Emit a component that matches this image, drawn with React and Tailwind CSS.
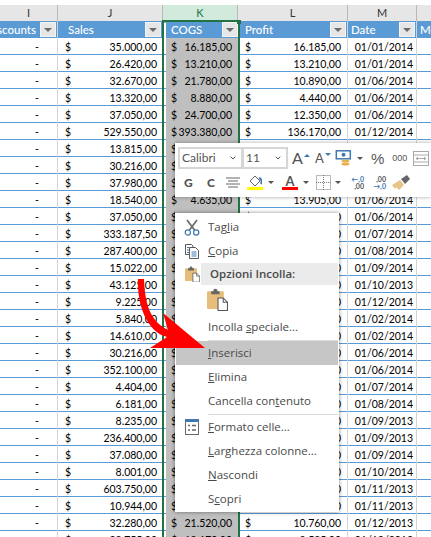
import React from 'react';
import { ChevronDown } from 'lucide-react';

const rows = [
  ['35.000,00', '16.185,00', '16.185,00', '01/01/2014'],
  ['26.420,00', '13.210,00', '13.210,00', '01/01/2014'],
  ['32.670,00', '21.780,00', '10.890,00', '01/06/2014'],
  ['13.320,00', '8.880,00', '4.440,00', '01/06/2014'],
  ['37.050,00', '24.700,00', '12.350,00', '01/06/2014'],
  ['529.550,00', '393.380,00', '136.170,00', '01/12/2014'],
  ['13.815,00', '9.210,00', '4.605,00', '01/03/2014'],
  ['30.216,00', '20.144,00', '10.072,00', '01/06/2014'],
  ['37.980,00', '25.320,00', '12.660,00', '01/06/2014'],
  ['18.540,00', '4.635,00', '13.905,00', '01/06/2014'],
  ['37.050,00', '24.700,00', '12.350,00', '01/06/2014'],
  ['333.187,50', '261.800,00', '71.387,50', '01/07/2014'],
  ['287.400,00', '239.500,00', '47.900,00', '01/08/2014'],
  ['15.022,00', '10.014,00', '5.008,00', '01/09/2014'],
  ['43.125,00', '28.750,00', '14.375,00', '01/10/2013'],
  ['9.225,00', '6.150,00', '3.075,00', '01/12/2014'],
  ['5.840,00', '1.460,00', '4.380,00', '01/02/2014'],
  ['14.610,00', '9.740,00', '4.870,00', '01/02/2014'],
  ['30.216,00', '20.144,00', '10.072,00', '01/06/2014'],
  ['352.100,00', '251.500,00', '100.600,00', '01/06/2014'],
  ['4.404,00', '3.670,00', '734,00', '01/07/2014'],
  ['6.181,00', '5.151,00', '1.030,00', '01/08/2014'],
  ['8.235,00', '5.490,00', '2.745,00', '01/09/2013'],
  ['236.400,00', '197.000,00', '39.400,00', '01/09/2013'],
  ['37.080,00', '9.270,00', '27.810,00', '01/09/2014'],
  ['8.001,00', '5.334,00', '2.667,00', '01/10/2014'],
  ['603.750,00', '575.000,00', '28.750,00', '01/11/2013'],
  ['10.944,00', '9.120,00', '1.824,00', '01/11/2013'],
  ['32.280,00', '21.520,00', '10.760,00', '01/12/2013'],
  ['28.755,00', '19.170,00', '9.585,00', '01/12/2013'],
];

const colClass = 'grid grid-cols-[58px_105px_75px_110px_69px_14px]';

const Money = ({ value, className = '' }) => (
  <div className={`flex justify-between items-center pt-[2px] border-r border-[#d4d4d4] ${className}`}>
    <span>$</span>
    <span>{value}</span>
  </div>
);

const FilterBtn = () => (
  <div className="w-[16px] h-[15px] shrink-0 bg-[#e6e6e6] border border-[#f4f4f4] flex items-center justify-center">
    <div className="w-0 h-0 border-x-[4px] border-x-transparent border-t-[4px] border-t-[#6b6b6b]" />
  </div>
);

const HeadCell = ({ label, className = '' }) => (
  <div className={`flex items-center justify-between overflow-hidden bg-[#5b9bd5] text-white text-[11.5px] font-medium ${className}`}>
    <span className="whitespace-nowrap">{label}</span>
    <FilterBtn />
  </div>
);

const ColLetter = ({ children, className = '' }) => (
  <div className={`flex items-center justify-center border-r border-[#b8b8b8] border-b border-b-[#a8a8a8] ${className}`}>
    {children}
  </div>
);

const ScissorsIcon = () => (
  <svg width="16" height="17" viewBox="0 0 16 17" fill="none">
    <path d="M3 1 L10.5 11 M13 1 L5.5 11" stroke="#707070" strokeWidth="1.8" />
    <circle cx="3.8" cy="13.5" r="2.6" stroke="#3f78b0" strokeWidth="1.2" />
    <circle cx="12.2" cy="13.5" r="2.6" stroke="#3f78b0" strokeWidth="1.2" />
  </svg>
);

const CopyIcon = () => (
  <svg width="16" height="16" viewBox="0 0 16 16" fill="none" stroke="#5a5a5a" strokeWidth="1">
    <path d="M1.5 1.5 H7.5 L9 3 V4 M1.5 1.5 V11.5 H5" />
    <path d="M5.5 4.5 H11.5 L14.5 7.5 V15.5 H5.5 Z" fill="#fff" />
    <path d="M3 4.5 H5 M3 7 H5 M3 9.500 H5 M7.500 9 H12.500 M7.500 11 H12.500 M7.500 13 H12.500" stroke="#3f78b0" />
  </svg>
);

const ClipboardIcon = ({ size = 15 }) => (
  <svg width={size} height={size * 1.1} viewBox="0 0 20 22" fill="none">
    <rect x="0" y="3" width="16" height="17" rx="1" fill="#e7bd7b" />
    <path d="M4 3 H6 C6 0 10 0 10 3 H12 V6 H4 Z" fill="#666" />
    <path d="M10.500 9.500 H15.500 L19.500 13.500 V21.500 H10.500 Z" fill="#fff" stroke="#555" />
    <path d="M15.500 9.500 V13.500 H19.500" stroke="#555" />
  </svg>
);

const FormIcon = () => (
  <svg width="14" height="16" viewBox="0 0 14 16" fill="none">
    <rect x="0.500" y="0.500" width="13" height="15" fill="#fff" stroke="#666" />
    <rect x="0" y="0" width="14" height="3" fill="#3f78b0" />
    <path d="M3 6.500 H5 M7 6.500 H11 M3 11 H5 M7 11 H11" stroke="#666" strokeWidth="1.400" />
  </svg>
);

const Caret = () => (
  <div className="w-0 h-0 border-x-[3px] border-x-transparent border-t-[3px] border-t-[#555]" />
);

const UpDownA = ({ up, size }) => (
  <div className="w-[22px] flex items-end justify-center gap-px">
    <span className={`${size} leading-none text-[#555]`}>A</span>
    <div className={`w-0 h-0 mb-[9px] border-x-[3px] border-x-transparent ${up ? 'border-b-[3px] border-b-[#3f78b0]' : 'border-t-[3px] border-t-[#3f78b0]'}`} />
  </div>
);

const Combo = ({ label, width }) => (
  <div className={`${width} h-[22px] flex items-center justify-between border-2 border-[#d6d6d6] px-[2px] text-[12px] text-[#555] font-['Lato',sans-serif]`}>
    <span>{label}</span>
    <ChevronDown className="w-[8px] h-[8px] text-[#555] mr-[2px]" strokeWidth={3} />
  </div>
);

const MiniToolbar = () => (
  <div className="absolute left-[175px] top-[143px] w-[256px] h-[54px] bg-white shadow-[0_0_4px_rgba(0,0,0,0.35)] pt-[4px] pl-[3px] flex flex-col gap-[3px]">
    <div className="flex items-center h-[22px]">
      <Combo label="Calibri" width="w-[65px]" />
      <Combo label="11" width="w-[46px] -ml-[1px]" />
      <div className="ml-[2px] flex items-center">
        <UpDownA up size="text-[16px]" />
        <UpDownA size="text-[13px]" />
      </div>
      <svg className="ml-[1px]" width="17" height="17" viewBox="0 0 16 17" fill="none">
        <rect x="0.800" y="0.800" width="14" height="8" stroke="#3f78b0" strokeWidth="1.500" />
        <circle cx="8" cy="4.800" r="2" fill="#3f78b0" />
        <ellipse cx="10" cy="11" rx="4" ry="1.600" fill="#e8b04f" />
        <ellipse cx="10" cy="14" rx="4" ry="1.600" fill="#e8b04f" />
      </svg>
      <div className="ml-[5px]"><Caret /></div>
      <span className="ml-[8px] text-[15px] leading-none text-[#555] font-['Liberation_Sans',sans-serif]">%</span>
      <span className="ml-[8px] text-[9px] leading-none text-[#555] font-['Liberation_Sans',sans-serif]">000</span>
      <svg className="ml-[6px]" width="16" height="15" viewBox="0 0 16 15" fill="none" stroke="#aaa">
        <rect x="0.500" y="0.500" width="15" height="14" />
        <path d="M0.500 4 H15.500 M0.500 11 H15.500 M3 7.500 H13 M3 7.500 L5 6 M3 7.500 L5 9 M13 7.500 L11 6 M13 7.500 L11 9" />
      </svg>
    </div>
    <div className="flex items-center h-[21px] text-[#555] font-['Lato',sans-serif]">
      <span className="ml-[6px] w-[10px] text-[12px] font-black">G</span>
      <span className="ml-[13px] w-[10px] text-[12px] font-black">C</span>
      <svg className="ml-[9px]" width="14" height="11" viewBox="0 0 14 11" stroke="#666">
        <path d="M0 1 H14 M2 4 H12 M0 7 H14 M2 10 H12" />
      </svg>
      <div className="ml-[7px] w-[16px] flex flex-col items-center">
        <svg width="14" height="12" viewBox="0 0 14 12" fill="none">
          <path d="M2 6 L7 1 L12 6 L7 11 Z" fill="#fff" stroke="#666" />
          <path d="M11 3 C14 4 14 7 13 9" stroke="#3f78b0" strokeWidth="2" />
        </svg>
        <div className="w-[16px] h-[3px] bg-[#ffff00]" />
      </div>
      <div className="ml-[5px]"><Caret /></div>
      <div className="ml-[8px] w-[16px] flex flex-col items-center">
        <span className="text-[13px] leading-[12px] font-bold">A</span>
        <div className="w-[16px] h-[3px] bg-[#ff0000]" />
      </div>
      <div className="ml-[5px]"><Caret /></div>
      <svg className="ml-[7px]" width="15" height="15" viewBox="0 0 15 15" fill="none" stroke="#777" strokeDasharray="1 1">
        <rect x="0.500" y="0.500" width="14" height="14" />
        <path d="M7.500 0 V15 M0 7.500 H15" />
      </svg>
      <div className="ml-[4px]"><Caret /></div>
      <div className="ml-[7px] w-[16px] flex flex-col text-[7px] leading-[7px] font-bold items-end">
        <span className="text-[#3f78b0]">←,0</span>
        <span>,00</span>
      </div>
      <div className="ml-[6px] w-[16px] flex flex-col text-[7px] leading-[7px] font-bold items-end">
        <span>,00</span>
        <span className="text-[#3f78b0]">→,0</span>
      </div>
      <svg className="ml-[6px]" width="18" height="15" viewBox="0 0 18 15" fill="none">
        <path d="M0 10 L8 5 L12 10 L7 15 L4 12 L3 14 Z" fill="#e8c48a" />
        <path d="M9 4 L15 0 L18 4 L13 9 Z" fill="#666" />
      </svg>
    </div>
  </div>
);

const MenuItem = ({ children, icon, active }) => (
  <div className={`h-[24px] flex items-center ${active ? 'bg-[#c6c6c6]' : ''}`}>
    <div className="w-[32px] shrink-0 flex justify-center">{icon}</div>
    <span>{children}</span>
  </div>
);

const Sep = () => <div className="h-[2px] ml-[32px] flex items-center"><div className="w-full h-px bg-[#dcdcdc]" /></div>;

const ContextMenu = () => (
  <div className="absolute left-[175px] top-[213px] w-[164px] h-[299px] bg-white shadow-[0_0_4px_rgba(0,0,0,0.45)] py-[2px] pl-px pr-px text-[11.5px] text-[#4a4a4a] font-['Open_Sans',sans-serif]">
    <MenuItem icon={<ScissorsIcon />}>Tag<u>l</u>ia</MenuItem>
    <MenuItem icon={<CopyIcon />}><u>C</u>opia</MenuItem>
    <div className="h-[22px] flex items-center">
      <div className="w-[32px] shrink-0 flex justify-center"><ClipboardIcon /></div>
      <div className="flex-1 -ml-[7px] h-full pl-[9px] flex items-center bg-[#ebebeb] font-semibold">Opzioni Incolla:</div>
    </div>
    <div className="h-[30px] pl-[31px] flex items-center"><ClipboardIcon size={21} /></div>
    <MenuItem>Incolla <u>s</u>peciale...</MenuItem>
    <Sep />
    <MenuItem active><u>I</u>nserisci</MenuItem>
    <MenuItem><u>E</u>limina</MenuItem>
    <MenuItem>Cancella con<u>t</u>enuto</MenuItem>
    <Sep />
    <MenuItem icon={<FormIcon />}><u>F</u>ormato celle...</MenuItem>
    <MenuItem><u>L</u>arghezza colonne...</MenuItem>
    <MenuItem><u>N</u>ascondi</MenuItem>
    <MenuItem>S<u>c</u>opri</MenuItem>
  </div>
);

const App = () => {
  return (
    <div className="relative w-[431px] h-[537px] overflow-hidden bg-white text-[10.5px] text-black font-['Lato',sans-serif]">
      <div className="h-[5px]" />
      {/* column letters */}
      <div className={`${colClass} h-[16px] bg-[#e6e6e6] text-[#333] text-[11px]`}>
        <ColLetter>I</ColLetter>
        <ColLetter>J</ColLetter>
        <ColLetter className="bg-[#d2eadb] text-[#217346] border-b-[#217346]">K</ColLetter>
        <ColLetter>L</ColLetter>
        <ColLetter>M</ColLetter>
        <ColLetter className="border-r-0" />
      </div>
      {/* table header */}
      <div className={`${colClass} h-[17px]`}>
        <HeadCell label="Discounts" className="justify-end gap-[4px] pr-px border-r border-[#d4d4d4]" />
        <HeadCell label="Sales" className="pl-[10px] pr-px border-r border-[#d4d4d4]" />
        <HeadCell label="COGS" className="ml-[3px] pl-[5px]" />
        <HeadCell label="Profit" className="pl-[7px] pr-px border-r border-[#d4d4d4]" />
        <HeadCell label="Date" className="pl-[3px] pr-px border-r border-[#d4d4d4]" />
        <div className="bg-[#5b9bd5] text-white text-[11.5px] font-medium pl-[3px] overflow-hidden flex items-center">Me</div>
      </div>
      {/* data rows */}
      {rows.map((r, i) => (
        <div key={i} className={`${colClass} h-[17px] border-b border-[#5b9bd5]`}>
          <div className="flex items-center justify-end pt-[2px] pr-[18px] border-r border-[#d4d4d4]">-</div>
          <Money value={r[0]} className="pl-[7px] pr-[5px]" />
          <Money value={r[1]} className="ml-[3px] pl-[5px] pr-[6px] bg-[#bfbfbf] border-r-0" />
          <Money value={r[2]} className="pl-[7px] pr-[6px]" />
          <div className="flex items-center justify-end pt-[2px] pr-[3px] border-r border-[#d4d4d4]">{r[3]}</div>
          <div />
        </div>
      ))}
      {/* selection frame */}
      <div className="absolute left-[162px] top-[20px] w-[78px] h-[517px] border-x-2 border-t-2 border-[#217346]">
        <div className="absolute -right-[3px] -top-[2px] w-[4px] h-[4px] bg-[#217346]" />
      </div>
      <MiniToolbar />
      <ContextMenu />
      {/* red arrow */}
      <svg className="absolute left-0 top-0" width="431" height="537" viewBox="0 0 431 537" fill="none">
        <path d="M138 279 L144 279 C145 300 148 320 168 330 L163 313 L205 348 L150 348 L167 337 C147 332 137 305 138 279 Z" fill="#ff0000" />
      </svg>
    </div>
  );
};

export default App;
